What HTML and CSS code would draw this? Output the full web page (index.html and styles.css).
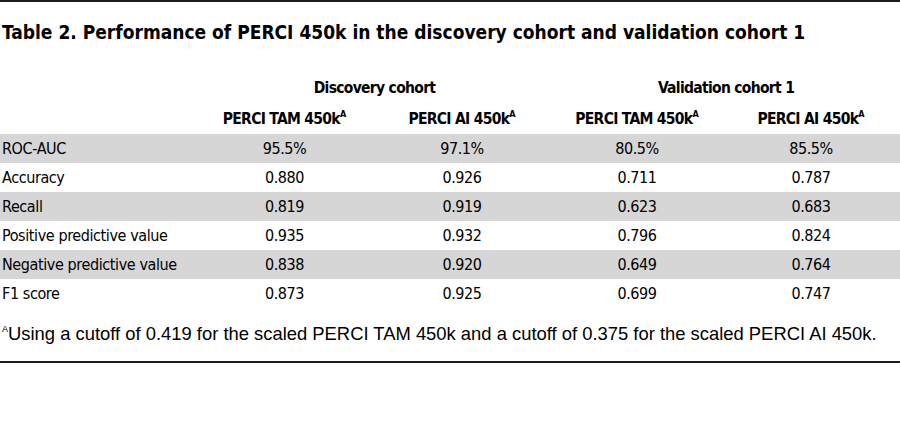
FILE: index.html
```html
<!DOCTYPE html>
<html>
<head>
<meta charset="utf-8">
<link rel="stylesheet" href="styles.css">
</head>
<body>
<div class="page">
  <h1 class="title">Table 2. Performance of PERCI 450k in the discovery cohort and validation cohort 1</h1>
  <table class="data">
    <colgroup>
      <col class="c-label"><col class="c1"><col class="c2"><col class="c3"><col class="c4">
    </colgroup>
    <thead>
      <tr class="group">
        <th></th>
        <th colspan="2">Discovery cohort</th>
        <th colspan="2">Validation cohort 1</th>
      </tr>
      <tr class="sub">
        <th></th>
        <th>PERCI TAM 450k<sup>A</sup></th>
        <th>PERCI AI 450k<sup>A</sup></th>
        <th>PERCI TAM 450k<sup>A</sup></th>
        <th>PERCI AI 450k<sup>A</sup></th>
      </tr>
    </thead>
    <tbody>
      <tr class="shade"><td>ROC-AUC</td><td>95.5%</td><td>97.1%</td><td>80.5%</td><td>85.5%</td></tr>
      <tr><td>Accuracy</td><td>0.880</td><td>0.926</td><td>0.711</td><td>0.787</td></tr>
      <tr class="shade"><td>Recall</td><td>0.819</td><td>0.919</td><td>0.623</td><td>0.683</td></tr>
      <tr><td>Positive predictive value</td><td>0.935</td><td>0.932</td><td>0.796</td><td>0.824</td></tr>
      <tr class="shade"><td>Negative predictive value</td><td>0.838</td><td>0.920</td><td>0.649</td><td>0.764</td></tr>
      <tr><td>F1 score</td><td>0.873</td><td>0.925</td><td>0.699</td><td>0.747</td></tr>
    </tbody>
  </table>
  <p class="note"><sup>A</sup>Using a cutoff of 0.419 for the scaled PERCI TAM 450k and a cutoff of 0.375 for the scaled PERCI AI 450k.</p>
</div>
</body>
</html>
```
FILE: styles.css
```css
html, body {
  margin: 0;
  padding: 0;
  background: #ffffff;
  color: #000000;
}
.page {
  border-top: 2px solid #1a1a1a;
  border-bottom: 2px solid #1a1a1a;
  width: 900px;
  padding-bottom: 15px;
}
.title {
  margin: 0;
  padding: 18px 0 0 2px;
  height: 31px;
  font-family: "DejaVu Sans", sans-serif;
  font-stretch: condensed;
  font-weight: bold;
  font-size: 19px;
  line-height: 24px;
}
.data {
  border-collapse: collapse;
  table-layout: fixed;
  width: 900px;
  margin-top: 21px;
  font-family: "DejaVu Sans", sans-serif;
  font-stretch: condensed;
  font-size: 16px;
  white-space: nowrap;
}
.c-label { width: 197px; }
.c1 { width: 175px; }
.c2 { width: 180px; }
.c3 { width: 170px; }
.c4 { width: 178px; }
.data th {
  font-weight: bold;
  text-align: center;
  padding: 0;
  height: 31px;
  font-size: 15.5px;
  letter-spacing: -0.7px;
}
.data sup {
  font-size: 9px;
  vertical-align: 7px;
  line-height: 0;
  letter-spacing: 0;
}
.data td {
  height: 29px;
  padding: 0;
  text-align: center;
  line-height: 29px;
  letter-spacing: -0.4px;
}
.data td:first-child {
  text-align: left;
  padding-left: 2px;
}
.shade td { background: #d6d6d6; }
.note {
  margin: 14px 0 0 2px;
  font-family: "Liberation Sans", sans-serif;
  font-size: 18.4px;
  line-height: 24px;
  white-space: nowrap;
}
.note sup {
  font-size: 9px;
  vertical-align: 8px;
  line-height: 0;
}
```
